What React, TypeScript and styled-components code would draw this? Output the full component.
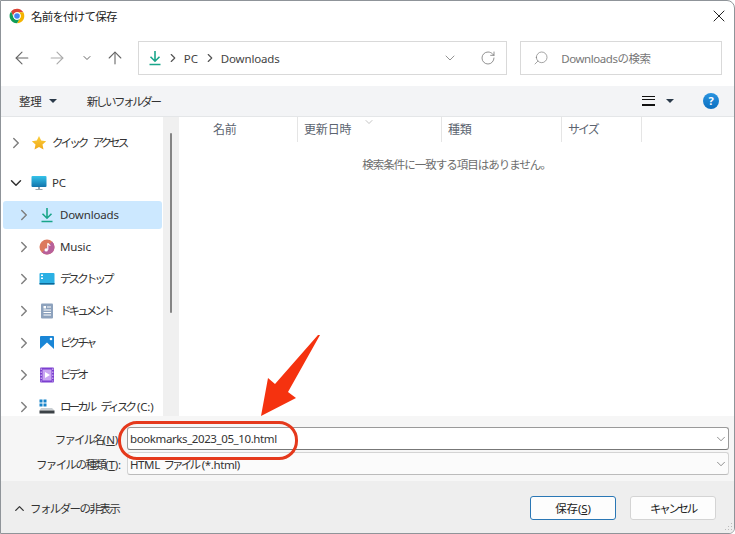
import React from 'react';
import styled, { createGlobalStyle } from 'styled-components';
import { ArrowLeft, ArrowRight, ArrowUp, ChevronDown, ChevronRight, ChevronUp, RotateCw, Search, X } from 'lucide-react';

const GlobalStyle = createGlobalStyle`
	html, body {
		margin: 0;
		padding: 0;
		background: #fff;
	}
	* {
		box-sizing: border-box;
	}
	svg {
		flex: none;
	}
	body {
		font-family: "Noto Sans", "Noto Sans CJK JP", sans-serif;
		font-size: 11.5px;
		letter-spacing: -0.15px;
		color: #333;
	}
`;

// katakana in the dialog font is much narrower than in Noto
const Narrow = styled.span<{ $spacing?: number }>`
	letter-spacing: ${(p) => p.$spacing ?? -2.9}px;
	word-spacing: 6px;
`;

const Window = styled.div`
	position: relative;
	width: 735px;
	height: 534px;
	display: flex;
	flex-direction: column;
	background: #fff;
	border: 1px solid #8f9499;
	border-radius: 0 8px 6px 0;
	overflow: hidden;
`;

const TitleBar = styled.div`
	height: 29px;
	display: flex;
	align-items: center;
	padding: 0 5px 0 8px;
	gap: 6px;
`;

const Title = styled.div`
	flex: 1;
	letter-spacing: -0.8px;
	color: #222;
`;

const NavBar = styled.div`
	height: 56px;
	display: flex;
	align-items: center;
	padding: 0 12px 0 10px;
`;

const NavButton = styled.div<{ $width: number; $color?: string }>`
	width: ${(p) => p.$width}px;
	display: flex;
	justify-content: center;
	color: ${(p) => p.$color || '#666'};
`;

const AddressBox = styled.div`
	width: 370px;
	height: 34px;
	display: flex;
	align-items: center;
	padding: 0 10px 0 8px;
	border: 1px solid #d9d9d9;
`;

const Crumb = styled.span`
	color: #444;
	margin-left: 4px;
	padding-right: 2px;
`;

const CrumbArrow = styled.span`
	display: flex;
	margin-left: 3px;
	color: #555;
`;

const AddressTools = styled.div`
	margin-left: auto;
	display: flex;
	align-items: center;
	gap: 22px;
	color: #777;
`;

const SearchBox = styled.div`
	width: 202px;
	height: 34px;
	margin-left: 13px;
	display: flex;
	align-items: center;
	gap: 12px;
	padding: 0 0 0 12px;
	border: 1px solid #d9d9d9;
	color: #777;
`;

const SearchIcon = styled(Search)`
	transform: scaleX(-1);
`;

const SearchText = styled.span`
	letter-spacing: -0.45px;
`;

const CommandBar = styled.div`
	height: 31px;
	display: flex;
	align-items: center;
	padding: 0 15px 0 18px;
	background: #f3f4f6;
	border-bottom: 1px solid #e4e6e8;
	color: #333;
`;

const Caret = styled.span`
	width: 0;
	height: 0;
	border-left: 4.5px solid transparent;
	border-right: 4.5px solid transparent;
	border-top: 4px solid #2b3a4a;
`;

const CommandLabel = styled.span`
	display: flex;
	align-items: center;
	gap: 7px;
	margin-right: 30px;
`;

const CommandRight = styled.div`
	margin-left: auto;
	display: flex;
	align-items: center;
`;

const ViewIcon = styled.div`
	width: 13px;
	height: 10px;
	margin-right: 11px;
	border-top: 1px solid #111;
	border-bottom: 1px solid #111;
	position: relative;

	&::before {
		content: '';
		position: absolute;
		left: 0;
		right: 0;
		top: 2px;
		height: 4px;
		border-top: 1px solid #111;
		border-bottom: 1px solid #111;
	}
`;

const HelpIcon = styled.div`
	width: 16px;
	height: 16px;
	margin-left: 29px;
	border-radius: 50%;
	background: linear-gradient(#2a94e0, #0b6fc0);
	color: #fff;
	font-size: 11px;
	font-weight: 700;
	line-height: 16px;
	text-align: center;
`;

const Main = styled.div`
	height: 299px;
	display: flex;
`;

const Sidebar = styled.div`
	width: 162px;
	padding-top: 12px;
	display: flex;
	flex-direction: column;
	gap: 4px;
	overflow: hidden;
`;

const TreeRow = styled.div<{ $depth: number; $selected?: boolean; $gapAfter?: boolean }>`
	height: 28px;
	flex: none;
	margin: 0 1px ${(p) => (p.$gapAfter ? 8 : 0)}px 2px;
	padding-left: ${(p) => 7 + p.$depth * 8}px;
	display: flex;
	align-items: center;
	border-radius: 3px;
	background: ${(p) => (p.$selected ? '#cce8ff' : 'transparent')};
	color: #333;
	white-space: pre;
`;

const TreeLabel = styled.span`
	padding-bottom: 2px;
`;

const Twisty = styled.span<{ $open?: boolean }>`
	width: 11px;
	display: flex;
	justify-content: center;
	color: ${(p) => (p.$open ? '#333' : '#808080')};
	margin-right: 10px;
`;

const TreeIcon = styled.svg`
	width: 16px;
	height: 16px;
	margin-right: 5px;
	flex: none;
`;

const ScrollTrack = styled.div`
	width: 16px;
	background: #f0f0f0;
	padding: 16px 0 0 7px;
`;

const ScrollThumb = styled.div`
	width: 2px;
	height: 180px;
	background: #858585;
	border-radius: 1px;
`;

const FileArea = styled.div`
	flex: 1;
	display: flex;
	flex-direction: column;
`;

const HeaderRow = styled.div`
	height: 25px;
	display: flex;
	color: #5c6470;
	font-size: 12px;
`;

const HeaderCell = styled.div<{ $width: number }>`
	position: relative;
	width: ${(p) => p.$width}px;
	padding-left: 6px;
	line-height: 26px;
	border-right: 1px solid #e5e5e5;
`;

const NameCell = styled(HeaderCell)`
	padding-left: 34px;
`;

const SortMark = styled.span`
	position: absolute;
	left: 65px;
	top: -1px;
	display: flex;
	color: #888;
`;

const EmptyText = styled.div`
	margin-top: 14px;
	text-align: center;
	color: #6d6d6d;
	letter-spacing: -1px;
`;

const FormArea = styled.div`
	height: 65px;
	padding: 11px 5px 0 0;
	background: #f6f6f6;
	display: flex;
	flex-direction: column;
	gap: 2px;
`;

const FormRow = styled.div`
	display: flex;
	align-items: center;
	height: 23px;
`;

const FieldLabel = styled.label`
	width: 120px;
	text-align: right;
	color: #333;
	margin-right: 6px;
	white-space: nowrap;
`;

const Field = styled.div<{ $focused?: boolean }>`
	flex: 1;
	height: 23px;
	display: flex;
	align-items: center;
	padding: 0 0 0 2px;
	border: 1px solid ${(p) => (p.$focused ? '#9a9a9a' : '#d4d4d4')};
	border-bottom-color: ${(p) => (p.$focused ? '#777' : '#bbb')};
	border-radius: 3px;
	background: ${(p) => (p.$focused ? '#fff' : '#fbfbfb')};
	color: #333;
`;

const FieldValue = styled.span`
	flex: 1;
	letter-spacing: -0.4px;
	word-spacing: 1px;
	white-space: pre;
`;

const Footer = styled.div`
	flex: 1;
	display: flex;
	align-items: center;
	padding: 2px 18px 0 11px;
	background: #eeeeee;
`;

const ToggleFolders = styled.div`
	display: flex;
	align-items: center;
	gap: 3px;
	color: #333;
	margin-right: auto;
	letter-spacing: -1.6px;
`;

const DialogButton = styled.button<{ $primary?: boolean }>`
	width: 86px;
	height: 24px;
	margin-left: 14px;
	padding: 0;
	font: inherit;
	letter-spacing: inherit;
	color: #222;
	background: #fdfdfd;
	border: 1px solid ${(p) => (p.$primary ? '#2a77b5' : '#d4d4d4')};
	border-radius: 3px;
`;

const Ellipse = styled.div`
	position: absolute;
	left: 117px;
	top: 420px;
	width: 180px;
	height: 39px;
	border: 3px solid #e5391c;
	border-radius: 19px;
`;

const ArrowMark = styled.svg`
	position: absolute;
	left: 250px;
	top: 325px;
`;

const ResizeGrip = styled.svg`
	position: absolute;
	right: 1px;
	bottom: 1px;
`;

function ChromeIcon() {
	return (
		<svg width="16" height="16" viewBox="0 0 24 24">
			<path fill="#db4437" d="M3.2 5.4A11 11 0 0 1 21.5 6.5H12A5.5 5.5 0 0 0 6.9 14Z" />
			<path fill="#f4b400" d="M21.5 6.5A11 11 0 0 1 12 23L16.8 14.8A5.5 5.5 0 0 0 12 6.5Z" />
			<path fill="#0f9d58" d="M12 23A11 11 0 0 1 3.2 5.4L7 14.7A5.5 5.5 0 0 0 16.8 14.8Z" />
			<circle cx="12" cy="12" r="5.5" fill="#fff" />
			<circle cx="12" cy="12" r="4.2" fill="#4285f4" />
		</svg>
	);
}

function DownloadPaths() {
	return <path fill="none" stroke="#19a58a" strokeWidth="1.6" d="M8 1v10M3.5 6.8 8 11.2l4.5-4.4M2.5 14.5h11" />;
}

function QuickIcon() {
	return (
		<TreeIcon viewBox="0 0 16 16">
			<defs>
				<linearGradient id="star" x1="0" y1="0" x2="0" y2="1">
					<stop offset="0" stopColor="#fbcf3c" />
					<stop offset="1" stopColor="#f0a818" />
				</linearGradient>
			</defs>
			<path fill="url(#star)" d="M8 1l2.2 4.6 5 .6-3.7 3.4 1 5L8 12.1 3.5 14.6l1-5L.8 6.2l5-.6z" />
		</TreeIcon>
	);
}

function PcIcon() {
	return (
		<TreeIcon viewBox="0 0 16 16">
			<defs>
				<linearGradient id="screen" x1="0" y1="0" x2="0" y2="1">
					<stop offset="0" stopColor="#35c3ea" />
					<stop offset="1" stopColor="#1374ab" />
				</linearGradient>
			</defs>
			<rect x="0.5" y="1" width="15" height="11" rx="1" fill="url(#screen)" />
			<rect x="7" y="12" width="2" height="2" fill="#9aa5ad" />
			<rect x="4.5" y="14" width="7" height="1" fill="#9aa5ad" />
		</TreeIcon>
	);
}

function MusicIcon() {
	return (
		<TreeIcon viewBox="0 0 16 16">
			<circle cx="8" cy="8" r="7.5" fill="#dc7a5e" />
			<path fill="#b8609a" d="M15.5 8A7.5 7.5 0 0 1 3 13.6L13 2.4A7.5 7.5 0 0 1 15.5 8z" />
			<path fill="none" stroke="#fff" strokeWidth="1.2" d="M8.8 10.8V4.2c.4 1.3 2 1.500 2.400 2.600" />
			<circle cx="7.2" cy="10.9" r="1.7" fill="#fff" />
		</TreeIcon>
	);
}

function DesktopIcon() {
	return (
		<TreeIcon viewBox="0 0 16 16">
			<rect x="0.5" y="2" width="15" height="11.5" rx="1" fill="#2bb0e4" />
			<rect x="0.5" y="12" width="15" height="1.5" fill="#0d6796" />
			<rect x="2" y="3.5" width="2" height="1.5" fill="#fff" />
			<rect x="2" y="6.5" width="2" height="1.5" fill="#fff" />
		</TreeIcon>
	);
}

function DocumentIcon() {
	return (
		<TreeIcon viewBox="0 0 16 16">
			<rect x="2" y="0.5" width="12" height="15" rx="1" fill="#8da2bd" />
			<path stroke="#fff" strokeWidth="1" d="M8 4h4M4.5 7h7.5M4.5 9.5h7.5M4.5 12h7.5" />
			<rect x="4.5" y="3" width="2.5" height="2.5" fill="#fff" />
		</TreeIcon>
	);
}

function PictureIcon() {
	return (
		<TreeIcon viewBox="0 0 16 16">
			<rect x="1" y="1" width="14" height="14" rx="1" fill="#1a86d6" />
			<path fill="#fff" d="M1 14l7-6.5 7 6.5v1H1z" />
			<circle cx="12" cy="4" r="1.3" fill="#fff" />
		</TreeIcon>
	);
}

function VideoIcon() {
	return (
		<TreeIcon viewBox="0 0 16 16">
			<rect x="1" y="0.5" width="14" height="15" rx="1" fill="#7c3fd0" />
			<rect x="3.5" y="2.5" width="9" height="11" fill="#c9a6f2" />
			<path fill="#fff" d="M6 5l5 3-5 3z" />
			<path stroke="#e2d0f8" strokeDasharray="1.5 1.5" d="M2.2 1.5v13M13.8 1.5v13" />
		</TreeIcon>
	);
}

function DiskIcon() {
	return (
		<TreeIcon viewBox="0 0 16 16">
			<rect x="0.5" y="0.5" width="3" height="3" fill="#1783c9" />
			<rect x="4.5" y="0.5" width="3" height="3" fill="#1783c9" />
			<rect x="0.5" y="4.5" width="3" height="3" fill="#1783c9" />
			<rect x="4.5" y="4.5" width="3" height="3" fill="#1783c9" />
			<path fill="#c9ced2" d="M2 9h11l2.5 2.5H.5z" />
			<rect x="0.5" y="11.5" width="15" height="3" fill="#3c4247" />
		</TreeIcon>
	);
}

interface TreeItem {
	label: React.ReactNode,
	icon: React.ReactNode,
	selected?: boolean,
}

const treeItems: TreeItem[] = [
	{ label: 'Downloads', icon: <TreeIcon viewBox="0 0 16 16"><DownloadPaths /></TreeIcon>, selected: true },
	{ label: 'Music', icon: <MusicIcon /> },
	{ label: <Narrow>デスクトップ</Narrow>, icon: <DesktopIcon /> },
	{ label: <Narrow>ドキュメント</Narrow>, icon: <DocumentIcon /> },
	{ label: <Narrow>ピクチャ</Narrow>, icon: <PictureIcon /> },
	{ label: <Narrow $spacing={-2.7}>ビデオ</Narrow>, icon: <VideoIcon /> },
	{ label: <><Narrow>ローカル ディスク</Narrow> (C:)</>, icon: <DiskIcon /> },
];

function App() {
	return (
		<Window>
			<GlobalStyle />
			<TitleBar>
				<ChromeIcon />
				<Title>名前を付けて保存</Title>
				<X size={20} strokeWidth={1.2} color="#222" />
			</TitleBar>
			<NavBar>
				<NavButton $width={22}><ArrowLeft size={20} strokeWidth={1.3} /></NavButton>
				<NavButton $width={48} $color="#aaa"><ArrowRight size={20} strokeWidth={1.3} /></NavButton>
				<NavButton $width={12}><ChevronDown size={12} strokeWidth={2} /></NavButton>
				<NavButton $width={45}><ArrowUp size={20} strokeWidth={1.3} /></NavButton>
				<AddressBox>
					<svg width="16" height="16" viewBox="0 0 16 16"><DownloadPaths /></svg>
					<CrumbArrow><ChevronRight size={14} strokeWidth={2} /></CrumbArrow>
					<Crumb>PC</Crumb>
					<CrumbArrow><ChevronRight size={14} strokeWidth={2} /></CrumbArrow>
					<Crumb>Downloads</Crumb>
					<AddressTools>
						<ChevronDown size={16} strokeWidth={1.2} />
						<RotateCw size={16} strokeWidth={1.2} />
					</AddressTools>
				</AddressBox>
				<SearchBox>
					<SearchIcon size={16} strokeWidth={1} />
					<SearchText>Downloadsの検索</SearchText>
				</SearchBox>
			</NavBar>
			<CommandBar>
				<CommandLabel>整理 <Caret /></CommandLabel>
				<CommandLabel><Narrow $spacing={-2.4}>新しいフォルダー</Narrow></CommandLabel>
				<CommandRight>
					<ViewIcon />
					<Caret />
					<HelpIcon>?</HelpIcon>
				</CommandRight>
			</CommandBar>
			<Main>
				<Sidebar>
					<TreeRow $depth={0} $gapAfter>
						<Twisty><ChevronRight size={18} strokeWidth={2} /></Twisty>
						<QuickIcon />
						<TreeLabel><Narrow>クイック アクセス</Narrow></TreeLabel>
					</TreeRow>
					<TreeRow $depth={0}>
						<Twisty $open><ChevronDown size={18} strokeWidth={2} /></Twisty>
						<PcIcon />
						<TreeLabel>PC</TreeLabel>
					</TreeRow>
					{treeItems.map((item, index) => (
						<TreeRow key={index} $depth={1} $selected={item.selected}>
							<Twisty><ChevronRight size={18} strokeWidth={2} /></Twisty>
							{item.icon}
							<TreeLabel>{item.label}</TreeLabel>
						</TreeRow>
					))}
				</Sidebar>
				<ScrollTrack><ScrollThumb /></ScrollTrack>
				<FileArea>
					<HeaderRow>
						<NameCell $width={119}>名前</NameCell>
						<HeaderCell $width={144}>
							<SortMark><ChevronDown size={12} strokeWidth={1} /></SortMark>
							更新日時
						</HeaderCell>
						<HeaderCell $width={120}>種類</HeaderCell>
						<HeaderCell $width={80}><Narrow $spacing={-2}>サイズ</Narrow></HeaderCell>
					</HeaderRow>
					<EmptyText>検索条件に一致する項目はありません。</EmptyText>
				</FileArea>
			</Main>
			<FormArea>
				<FormRow>
					<FieldLabel><Narrow $spacing={-1.9}>ファイル名</Narrow>(<u>N</u>):</FieldLabel>
					<Field $focused>
						<FieldValue>bookmarks_2023_05_10.html</FieldValue>
						<ChevronDown size={14} strokeWidth={1.1} color="#555" />
					</Field>
				</FormRow>
				<FormRow>
					<FieldLabel><Narrow $spacing={-1.6}>ファイルの種類</Narrow>(<u>T</u>):</FieldLabel>
					<Field>
						<FieldValue>HTML <Narrow $spacing={-2.8}>ファイル</Narrow> (*.html)</FieldValue>
						<ChevronDown size={14} strokeWidth={1.1} color="#555" />
					</Field>
				</FormRow>
			</FormArea>
			<Footer>
				<ToggleFolders>
					<ChevronUp size={15} strokeWidth={2} />
					<span>フォルダーの非表示</span>
				</ToggleFolders>
				<DialogButton $primary>保存(<u>S</u>)</DialogButton>
				<DialogButton><Narrow $spacing={-2.3}>キャンセル</Narrow></DialogButton>
			</Footer>
			<Ellipse />
			<ArrowMark width="80" height="100" viewBox="250 325 80 100">
				<path fill="#f5320f" d="M319 334 L287 391 L295 397 L260 415 L267 377 L274 383 L317 334Z" />
			</ArrowMark>
			<ResizeGrip width="10" height="10" viewBox="0 0 10 10">
				<path stroke="#bbb" strokeDasharray="1 2" d="M8.5 1v8M5.5 4v5M2.5 7v2" />
			</ResizeGrip>
		</Window>
	);
}

export default App;
